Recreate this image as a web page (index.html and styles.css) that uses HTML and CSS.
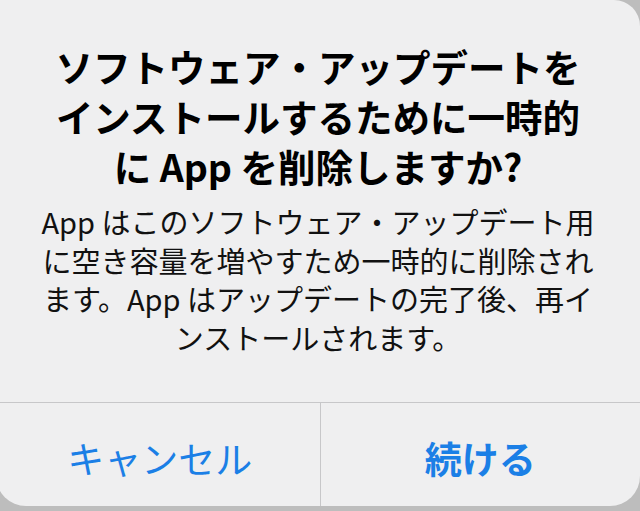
FILE: index.html
```html
<!DOCTYPE html>
<html lang="ja">
<head>
  <meta charset="UTF-8" />
  <meta name="viewport" content="width=device-width, initial-scale=1.0"/>
  <title>App の一時的な削除</title>
  <link rel="stylesheet" href="styles.css">
</head>
<body>

  <div class="alert">
    <div class="alert-content">
      <h1 class="alert-title">ソフトウェア・アップデートを<br>インストールするために一時的<br>に App を削除しますか?</h1>
      <p class="alert-message">App はこのソフトウェア・アップデート用<br>に空き容量を増やすため一時的に削除され<br>ます。App はアップデートの完了後、再イ<br>ンストールされます。</p>
    </div>
    <div class="alert-actions">
      <button class="alert-btn">キャンセル</button>
      <button class="alert-btn primary">続ける</button>
    </div>
  </div>

</body>
</html>
```

FILE: styles.css
```css
body {
  margin: 0;
  height: 511px;
  background-color: #bdbdbd;
  font-family: "Noto Sans CJK JP", "Noto Sans", sans-serif;
  overflow: hidden;
}

.alert {
  height: 506px;
  margin-left: -4px;
  width: 644px;
  background-color: #efeff0;
  border-radius: 0 26px 30px 30px;
  display: flex;
  flex-direction: column;
  overflow: hidden;
}

.alert-content {
  height: 403px;
  box-sizing: border-box;
  padding: 41px 20px 0 20px;
  text-align: center;
  border-bottom: 1px solid #c7c7c9;
}

.alert-title {
  margin: 0;
  font-size: 37.5px;
  line-height: 50px;
  font-weight: 700;
  color: #000;
}

.alert-message {
  margin: 11px 0 0 0;
  font-size: 29px;
  line-height: 38.7px;
  font-weight: 400;
  color: #111;
}

.alert-actions {
  flex: 1;
  display: flex;
  padding-left: 4px;
}

.alert-btn {
  flex: 1;
  background: none;
  border: none;
  padding: 6px 0 0 0;
  font-family: inherit;
  font-size: 37px;
  color: #1b7fe6;
}

.alert-btn + .alert-btn {
  border-left: 1px solid #c7c7c9;
}

.alert-btn.primary {
  font-weight: 700;
}
```
